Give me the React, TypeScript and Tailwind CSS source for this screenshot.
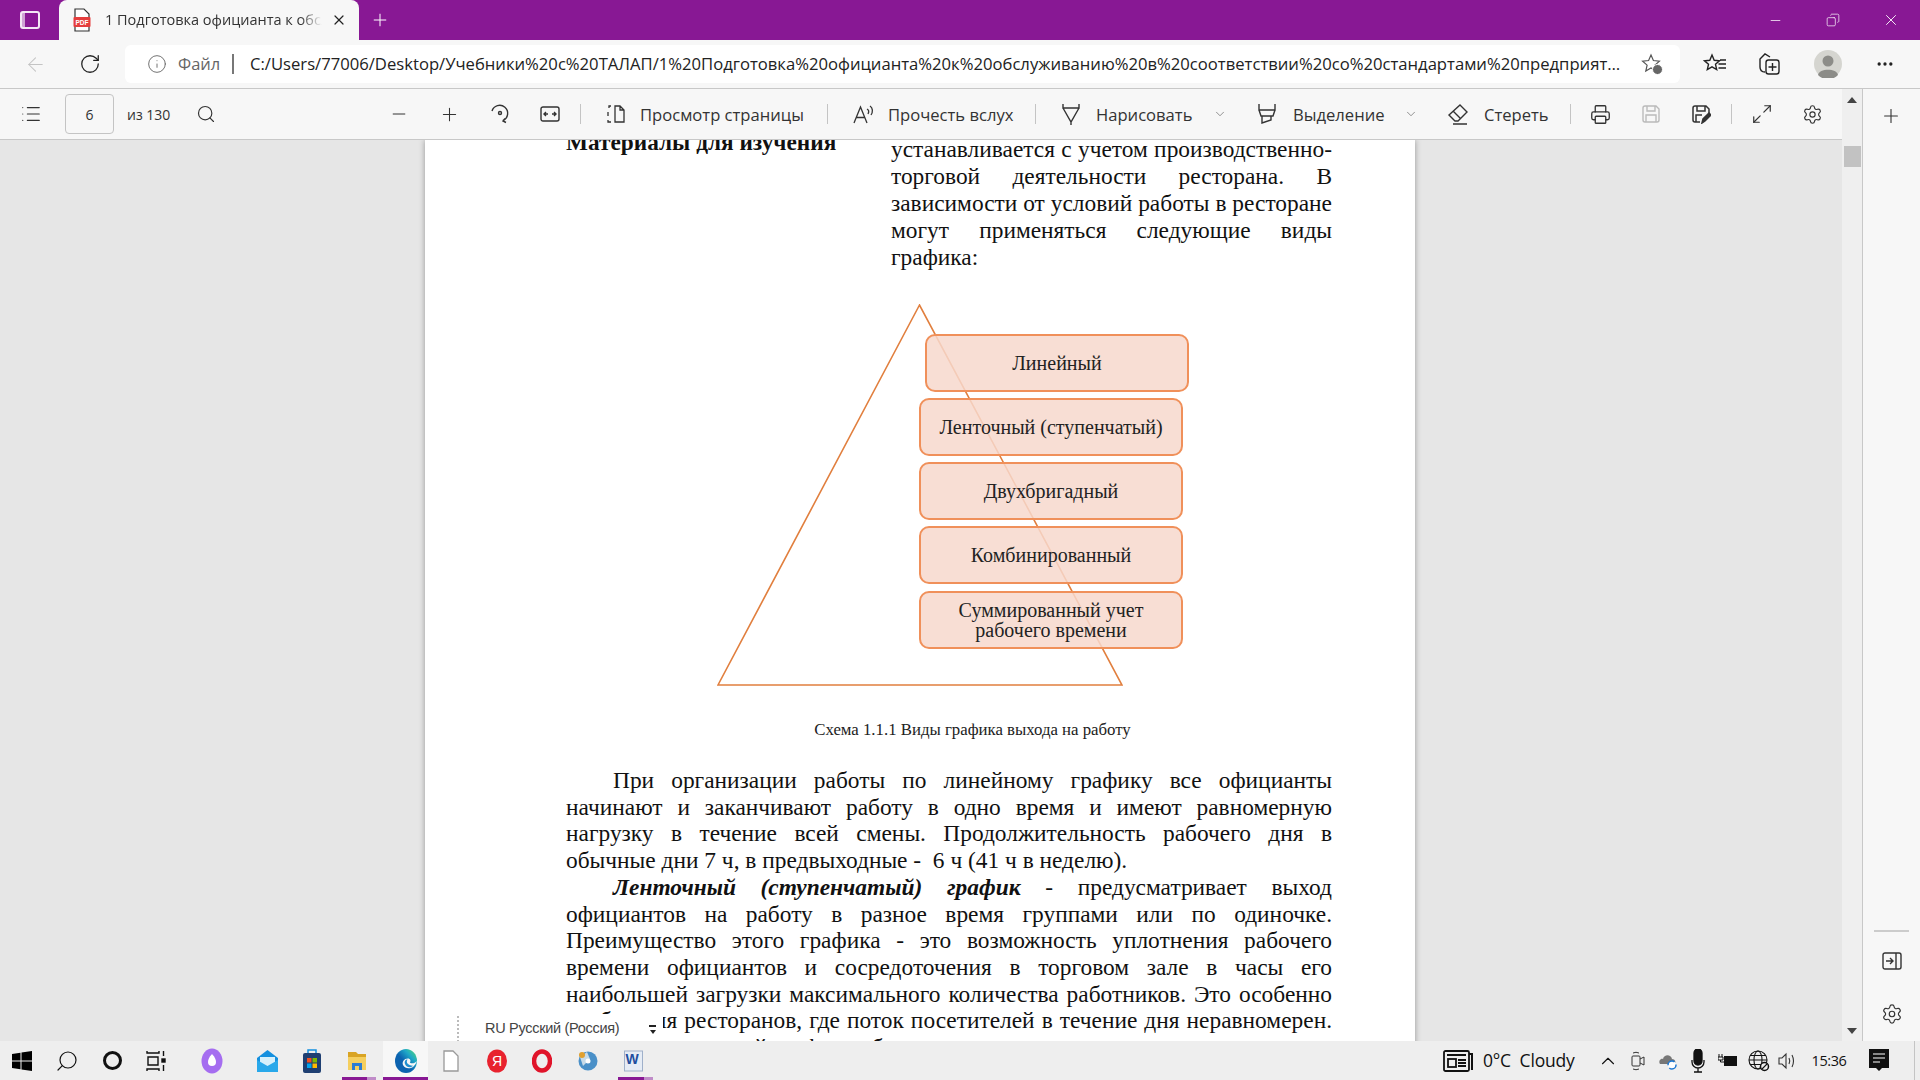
import { List, Minus, Plus, Search, RotateCw, Info, ArrowLeft, X, ChevronDown, ChevronUp, Settings, Printer, Maximize2, Copy, Ellipsis } from 'lucide-react';

const serif = "font-['Liberation_Serif',serif]";
const url = 'C:/Users/77006/Desktop/Учебники%20с%20ТАЛАП/1%20Подготовка%20официанта%20к%20обслуживанию%20в%20соответствии%20со%20стандартами%20предприятия.pdf';

function Sep({ cls }: { cls: string }) {
  return <span className={`${cls} w-px h-5 bg-[#c4c4c4] shrink-0`} />;
}

// fixed-width slot, keeps each toolbar item on its column
function Slot({ cls, children }: { cls: string; children: React.ReactNode }) {
  return <div className={`${cls} flex justify-center items-center shrink-0`}>{children}</div>;
}

function ToolLabel({ cls, children }: { cls: string; children: React.ReactNode }) {
  return <span className={`${cls} shrink-0 pt-[2px] text-[16.600px] text-[#333] whitespace-nowrap`}>{children}</span>;
}

function TitleBar() {
  return (
    <div className="h-10 bg-[#881894] flex items-end shrink-0">
      <Slot cls="w-[59px] h-10">
        <div className="w-[20px] h-[18px] border-2 border-white/90 rounded-[3px] flex"><span className="w-[3px] bg-white/60" /></div>
      </Slot>
      <div className="w-[300px] h-10 bg-[#f7f7f7] rounded-t-lg flex items-center">
        <svg width="18" height="24" viewBox="0 0 18 24" className="shrink-0 ml-[14px]">
          <path d="M2 1h9l5 5v17H2z" fill="#fff" stroke="#333" strokeWidth="1.2" />
          <rect x="0.5" y="9" width="17" height="10" rx="1" fill="#e53e3e" />
          <text x="9" y="16.500" fontSize="6.500" fontWeight="700" fill="#fff" textAnchor="middle" fontFamily="Liberation Sans">PDF</text>
        </svg>
        <span className="ml-[14px] text-[14.500px] text-[#333] w-[217px] overflow-hidden whitespace-nowrap font-['Open_Sans',sans-serif] [mask-image:linear-gradient(to_right,black_90%,transparent)]">1 Подготовка официанта к обслуживанию</span>
        <X size={16} strokeWidth={1.8} className="ml-[9px] text-[#222]" />
      </div>
      <Slot cls="w-[42px] h-10"><Plus size={20} strokeWidth={1.2} className="text-white" /></Slot>
      <div className="ml-auto flex h-10 items-center text-white">
        <Slot cls="w-[58px]"><Minus size={15} strokeWidth={1.2} /></Slot>
        <Slot cls="w-[58px]"><Copy size={14} strokeWidth={1.2} className="-scale-x-100" /></Slot>
        <Slot cls="w-[58px]"><X size={18} strokeWidth={1.2} /></Slot>
      </div>
    </div>
  );
}

function AddressBar() {
  return (
    <div className="h-[49px] bg-[#f7f7f7] flex items-center shrink-0 border-b border-[#c8c8c8] font-['Open_Sans',sans-serif]">
      <Slot cls="w-[70px]"><ArrowLeft size={23} strokeWidth={1.1} className="text-[#c4c4c4]" /></Slot>
      <Slot cls="w-[40px]"><RotateCw size={22} strokeWidth={1.4} className="text-[#222]" /></Slot>
      <div className="ml-[15px] w-[1555px] h-[38px] bg-white rounded-md flex items-center">
        <Info size={20} strokeWidth={1.1} className="ml-[22px] text-[#666] shrink-0" />
        <span className="ml-[11px] text-[16.500px] text-[#666] w-[40px]">Файл</span>
        <span className="ml-[14px] w-[2px] h-[20px] bg-[#777] shrink-0" />
        <span className="ml-[16px] text-[16.650px] text-[#222] truncate w-[1375px] block">{url}</span>
        <div className="relative ml-[16px]">
          <svg width="22" height="22" viewBox="0 0 22 22" fill="none" stroke="#555" strokeWidth="1.2">
            <path d="M10 2l2.400 5.500 6 .6-4.500 4 1.300 5.900L10 15l-5.200 3 1.300-5.900-4.500-4 6-.6z" />
          </svg>
          <span className="absolute right-0 bottom-0 w-[11px] h-[11px] rounded-full bg-[#666] border border-white" />
        </div>
      </div>
      <Slot cls="ml-[12px] w-[46px] text-[#222]">
        <svg width="24" height="22" viewBox="0 0 24 22" fill="none" stroke="currentColor" strokeWidth="1.4">
          <path d="M9 2l2.200 5.300 5.300.5-4 3.500 1.200 5.200L9 13.800l-4.700 2.700 1.200-5.200-4-3.500 5.300-.5z" />
          <path d="M17 7h6M15.500 11h7.500M15.500 15h7.500" />
        </svg>
      </Slot>
      <Slot cls="ml-[8px] w-[46px] text-[#222]">
        <svg width="22" height="24" viewBox="0 0 22 24" fill="none" stroke="currentColor" strokeWidth="1.4">
          <path d="M7 20c-3 0-5-2-5-5V7l5-5 5 3" />
          <rect x="8" y="8" width="13" height="14" rx="2.500" />
          <path d="M14.500 11v8M10.500 15h8" />
        </svg>
      </Slot>
      <Slot cls="ml-[22px] w-[28px]">
        <svg width="28" height="28" viewBox="0 0 28 28">
          <circle cx="14" cy="14" r="14" fill="#d5d5d0" />
          <circle cx="14" cy="11" r="5.500" fill="#8c8c88" />
          <path d="M4 25c1-7 19-7 20 0a14 14 0 0 1-20 0z" fill="#8c8c88" />
        </svg>
      </Slot>
      <Slot cls="ml-[28px] w-[30px]"><Ellipsis size={20} className="text-[#222]" /></Slot>
    </div>
  );
}

function PdfToolbar() {
  return (
    <div className="h-[51px] w-[1842px] bg-[#f7f7f7] flex items-center shrink-0 border-b border-[#c8c8c8] text-[#333] font-['Open_Sans',sans-serif]">
      <Slot cls="w-[62px]"><List size={22} strokeWidth={1.2} /></Slot>
      <div className="ml-[3px] w-[49px] h-[40px] shrink-0 border border-[#c4c4c4] rounded-sm flex items-center justify-center text-[14px]">6</div>
      <span className="ml-[13px] w-[44px] shrink-0 whitespace-nowrap text-[14px]">из 130</span>
      <Slot cls="ml-[15px] w-[40px]"><Search size={20} strokeWidth={1.4} /></Slot>
      <Slot cls="ml-[148px] w-[50px]"><Minus size={20} strokeWidth={1.2} /></Slot>
      <Slot cls="w-[50px]"><Plus size={21} strokeWidth={1.2} /></Slot>
      <Slot cls="ml-[1px] w-[50px]">
        <svg width="20" height="22" viewBox="0 0 20 22" fill="none" stroke="currentColor" strokeWidth="1.4">
          <path d="M2 8a8 8 0 1 1 11 9.500M15 15.500l-2 2.500 3 1.500" />
          <circle cx="10" cy="10" r="1.500" />
        </svg>
      </Slot>
      <Slot cls="w-[50px]">
        <svg width="20" height="16" viewBox="0 0 20 16" fill="none" stroke="currentColor" strokeWidth="1.4">
          <rect x="1" y="1" width="18" height="14" rx="2" />
          <path d="M4 8h4M12 8h4M6 6L4 8l2 2M14 6l2 2-2 2" />
        </svg>
      </Slot>
      <Sep cls="ml-[5px]" />
      <Slot cls="ml-[23px] w-[24px]">
        <svg width="20" height="20" viewBox="0 0 20 20" fill="none" stroke="currentColor" strokeWidth="1.3">
          <path d="M9 2h5l4 4v12H9zM14 2v4h4M5 2H3v2M2 8v4M2 16v2h3" />
        </svg>
      </Slot>
      <ToolLabel cls="ml-[12px] w-[164px]">Просмотр страницы</ToolLabel>
      <Sep cls="ml-[23px]" />
      <Slot cls="ml-[24px] w-[24px]">
        <svg width="24" height="22" viewBox="0 0 24 22" fill="none" stroke="currentColor" strokeWidth="1.3">
          <path d="M2 20L8.500 4 15 20M4.500 14.500h8M15 6c2 1 2 3 1 5M18 3c3 2 3 6 1 9" />
        </svg>
      </Slot>
      <ToolLabel cls="ml-[12px] w-[125px]">Прочесть вслух</ToolLabel>
      <Sep cls="ml-[22px]" />
      <Slot cls="ml-[23px] w-[24px]">
        <svg width="20" height="22" viewBox="0 0 20 22" fill="none" stroke="currentColor" strokeWidth="1.4">
          <path d="M2 1v4h16V1M2 5l8 14 8-14M10 19v3" />
        </svg>
      </Slot>
      <ToolLabel cls="ml-[13px] w-[94px]">Нарисовать</ToolLabel>
      <Slot cls="ml-[20px] w-[20px]"><ChevronDown size={14} strokeWidth={1.2} className="text-[#666]" /></Slot>
      <Slot cls="ml-[25px] w-[24px]">
        <svg width="20" height="22" viewBox="0 0 20 22" fill="none" stroke="currentColor" strokeWidth="1.4">
          <path d="M2 1v6h16V1M2 7l2 6h12l2-6M5 13v7l9-3v-4" />
        </svg>
      </Slot>
      <ToolLabel cls="ml-[14px] w-[88px]">Выделение</ToolLabel>
      <Slot cls="ml-[20px] w-[20px]"><ChevronDown size={14} strokeWidth={1.2} className="text-[#666]" /></Slot>
      <Slot cls="ml-[25px] w-[24px]">
        <svg width="22" height="22" viewBox="0 0 22 22" fill="none" stroke="currentColor" strokeWidth="1.4">
          <path d="M13 2l7 7-9 9H8l-6-6zM6 8l7 7M6 21h14" />
        </svg>
      </Slot>
      <ToolLabel cls="ml-[14px] w-[63px]">Стереть</ToolLabel>
      <Sep cls="ml-[23px]" />
      <Slot cls="ml-[14px] w-[30px]"><Printer size={21} strokeWidth={1.5} /></Slot>
      <Slot cls="ml-[21px] w-[30px]">
        <svg width="20" height="20" viewBox="0 0 20 20" fill="none" stroke="#bbb" strokeWidth="1.4">
          <path d="M2 4a2 2 0 0 1 2-2h11l3 3v11a2 2 0 0 1-2 2H4a2 2 0 0 1-2-2zM6 2v5h8V2M5 18v-7h10v7" />
        </svg>
      </Slot>
      <Slot cls="ml-[20px] w-[30px]">
        <svg width="20" height="20" viewBox="0 0 20 20" fill="none" stroke="currentColor" strokeWidth="1.5">
          <path d="M9 18H4a2 2 0 0 1-2-2V4a2 2 0 0 1 2-2h11l3 3v4M6 2v5h8V2M5 18v-7h6" />
          <path d="M11 19l1-4 6-6 2 2-6 6z" fill="currentColor" />
        </svg>
      </Slot>
      <Sep cls="ml-[15px]" />
      <Slot cls="ml-[15px] w-[30px]"><Maximize2 size={22} strokeWidth={1.3} /></Slot>
      <Slot cls="ml-[20px] w-[30px]"><Settings size={21} strokeWidth={1.3} /></Slot>
    </div>
  );
}

function Diagram() {
  const boxes = [
    { label: ['Линейный'], cls: 'ml-[6px]' },
    { label: ['Ленточный (ступенчатый)'], cls: '' },
    { label: ['Двухбригадный'], cls: '' },
    { label: ['Комбинированный'], cls: '' },
    { label: ['Суммированный учет', 'рабочего времени'], cls: '' },
  ];
  return (
    <div className="relative h-[382px] w-[406px] ml-[292px] mt-[14px]">
      <svg width="406" height="382" viewBox="0 0 406 382" className="absolute inset-0">
        <polygon points="202.500,1 1,381 405,381" fill="none" stroke="#e17f3e" strokeWidth="1.6" />
      </svg>
      <div className="absolute left-[202px] top-[29.500px] flex flex-col gap-[6.250px]">
        {boxes.map((b) => (
          <div key={b.label[0]} className={`${b.cls} w-[264px] h-[58px] rounded-[10px] border-2 border-[#f0905a] bg-[#f7d8cd]/85 flex flex-col items-center justify-center text-[20px] leading-[20px] text-[#222]`}>
            {b.label.map((l) => <span key={l}>{l}</span>)}
          </div>
        ))}
      </div>
    </div>
  );
}

function Line({ children, last }: { children: React.ReactNode; last?: boolean }) {
  return <div className={last ? 'whitespace-nowrap' : 'whitespace-nowrap [text-align-last:justify]'}>{children}</div>;
}

function PdfPage() {
  return (
    <div className={`relative w-[990px] h-[1000px] bg-white ml-[425px] ${serif} text-[#111] shadow-[0_0_6px_rgba(0,0,0,0.35)] overflow-hidden`}>
      <div className="relative h-[150px]">
        <div className="absolute left-[141px] -top-[10px] text-[23.300px] font-bold leading-[25px] whitespace-nowrap">Материалы для изучения</div>
        <div className="absolute left-[466px] w-[441px] -top-[4px] text-[23.400px] leading-[27px]">
          <Line>устанавливается с учетом производственно-</Line>
          <Line>торговой деятельности ресторана. В</Line>
          <Line>зависимости от условий работы в ресторане</Line>
          <Line>могут применяться следующие виды</Line>
          <Line last>графика:</Line>
        </div>
      </div>
      <Diagram />
      <div className="text-[16.800px] text-center leading-[20px] ml-[217px] w-[661px] mt-[34px] text-[#222]">Схема 1.1.1 Виды графика выхода на работу</div>
      <div className="ml-[141px] w-[766px] mt-[27px] text-[23.400px] leading-[26.700px]">
        <Line><span className="inline-block w-[47px]" />При организации работы по линейному графику все официанты</Line>
        <Line>начинают и заканчивают работу в одно время и имеют равномерную</Line>
        <Line>нагрузку в течение всей смены. Продолжительность рабочего дня в</Line>
        <Line last>обычные дни 7 ч, в предвыходные -&nbsp; 6 ч (41 ч в неделю).</Line>
        <Line><span className="inline-block w-[47px]" /><b><i>Ленточный (ступенчатый) график</i></b> - предусматривает выход</Line>
        <Line>официантов на работу в разное время группами или по одиночке.</Line>
        <Line>Преимущество этого графика - это возможность уплотнения рабочего</Line>
        <Line>времени официантов и сосредоточения в торговом зале в часы его</Line>
        <Line>наибольшей загрузки максимального количества работников. Это особенно</Line>
        <Line>удобно для ресторанов, где поток посетителей в течение дня неравномерен.</Line>
        <Line last><span className="inline-block w-[47px]" />При этом такой график работы</Line>
      </div>
      <div className="absolute left-0 top-[874px] w-[238px] h-[30px] bg-white flex items-center font-['Liberation_Sans',sans-serif] text-[14.500px] text-[#444]">
        <span className="ml-[32px] h-[26px] border-l-2 border-dotted border-[#bbb]" />
        <span className="ml-[26px] w-[133px] tracking-[-0.3px] whitespace-nowrap">RU Русский (Россия)</span>
        <span className="ml-[31px] flex flex-col items-center gap-[3px]">
          <span className="w-[7px] h-[2px] bg-[#222]" />
          <span className="w-0 h-0 border-x-[3px] border-x-transparent border-t-[4px] border-t-[#222]" />
        </span>
      </div>
    </div>
  );
}

function ScrollBar() {
  return (
    <div className="absolute left-[1842px] top-[89px] bottom-[39px] w-[20px] bg-[#efefef] flex flex-col items-center">
      <span className="mt-[8px] w-0 h-0 border-x-[5px] border-x-transparent border-b-[6px] border-b-[#444]" />
      <span className="mt-[43px] w-[17px] h-[21px] bg-[#c2c2c2]" />
      <span className="mt-auto mb-[7px] w-0 h-0 border-x-[5px] border-x-transparent border-t-[6px] border-t-[#444]" />
    </div>
  );
}

function SidePanel() {
  return (
    <div className="absolute left-[1862px] top-[89px] bottom-[39px] w-[58px] bg-[#f7f7f7] border-l border-[#c8c8c8] flex flex-col items-center text-[#333]">
      <Plus size={22} strokeWidth={1.2} className="mt-[16px] -ml-[1px]" />
      <span className="mt-auto w-[35px] h-[2px] bg-[#ccc]" />
      <svg width="20" height="18" viewBox="0 0 20 18" fill="none" stroke="currentColor" strokeWidth="1.4" className="mt-[20px]">
        <rect x="1" y="1" width="18" height="16" rx="2" />
        <path d="M14 1v16M4 9h7M8 6l3 3-3 3" />
      </svg>
      <Settings size={22} strokeWidth={1.3} className="mt-[33px] mb-[16px]" />
    </div>
  );
}

function Taskbar() {
  return (
    <div className="absolute left-0 right-0 bottom-0 h-[39px] bg-[#eeeeee] flex items-center text-[#111]">
      <Slot cls="w-[44px]">
        <svg width="20" height="20" viewBox="0 0 20 20" fill="#000">
          <path d="M0 3l8.500-1.200V9.500H0zM9.500 1.600L20 0v9.500H9.500zM0 10.500h8.500v7.700L0 17zM9.500 10.500H20V20L9.500 18.400z" />
        </svg>
      </Slot>
      <Slot cls="w-[46px]"><Search size={24} strokeWidth={1.2} className="-scale-x-100" /></Slot>
      <Slot cls="w-[44px]"><span className="w-[19px] h-[19px] rounded-full border-[3px] border-[#111]" /></Slot>
      <Slot cls="w-[44px]">
        <svg width="20" height="22" viewBox="0 0 20 22" fill="none" stroke="#111" strokeWidth="1.4">
          <path d="M1 1v2h12V1M1 21v-2h12v2M2 7h10v8H2z" />
          <rect x="16" y="9" width="3" height="3" fill="#111" />
          <path d="M17.500 1v5M17.500 15v6" />
        </svg>
      </Slot>
      <Slot cls="ml-[12px] w-[44px]">
        <svg width="22" height="26" viewBox="0 0 22 26">
          <ellipse cx="11" cy="13" rx="10.500" ry="12.500" fill="#a56df0" />
          <path d="M11 6c3 3 4 6 4 8a4 4 0 0 1-8 0c0-2 1-5 4-8z" fill="#fff" />
        </svg>
      </Slot>
      <Slot cls="ml-[11px] w-[44px]">
        <svg width="21" height="22" viewBox="0 0 21 22">
          <path d="M0 8L10.500 0 21 8v14H0z" fill="#1490df" />
          <path d="M3 7h15v7l-7.500 4L3 14z" fill="#d6f0fb" />
          <path d="M0 10l10.500 6L21 10v12H0z" fill="#28a8ea" />
        </svg>
      </Slot>
      <Slot cls="ml-[1px] w-[44px]">
        <svg width="20" height="26" viewBox="0 0 20 26">
          <path d="M6 5V2h8v3" fill="none" stroke="#1490df" strokeWidth="1.500" />
          <rect x="1" y="5" width="18" height="20" rx="2" fill="#1f3f72" />
          <rect x="5" y="10" width="4.500" height="4.500" fill="#f25022" /><rect x="10.500" y="10" width="4.500" height="4.500" fill="#7fba00" />
          <rect x="5" y="15.500" width="4.500" height="4.500" fill="#00a4ef" /><rect x="10.500" y="15.500" width="4.500" height="4.500" fill="#ffb900" />
        </svg>
      </Slot>
      <Slot cls="ml-[2px] w-[44px]">
        <svg width="20" height="20" viewBox="0 0 20 20"><path d="M0 1h8l2 2h8v4H0z" fill="#d9a424" /><path d="M0 6h18v13H0z" fill="#f5cf5f" /><path d="M4 12h10v7h-3v-4H7v4H4z" fill="#2b7cd3" /></svg>
      </Slot>
      <Slot cls="ml-[3px] w-[45px] h-[39px] bg-[#f7f7f7]">
        <svg width="22" height="24" viewBox="0 0 22 24">
          <defs>
            <linearGradient id="edgeFill" x1="0" y1="1" x2="1" y2="0">
              <stop offset="0.450" stopColor="#0c63b0" />
              <stop offset="0.700" stopColor="#1fa8c8" />
              <stop offset="0.950" stopColor="#4fd67a" />
            </linearGradient>
          </defs>
          <ellipse cx="11" cy="12" rx="11" ry="12" fill="url(#edgeFill)" />
          <path d="M8 16c2 4 7 4 10 2 2-2 3.500-4 3.800-6-2 2.500-5 3-7 1.500 1.500-1.500.5-4-2-4-3.500 0-6 3-4.800 6.500z" fill="#f7f7f7" />
          <path d="M10 15c-1-2.500.5-4.500 2.500-4.500-1 1.500-1 3 .5 4.500 2 1.500 4 2 5.500 1.500-3 3-7 2-8.500-1.500z" fill="#1f8fd0" />
        </svg>
      </Slot>
      <Slot cls="ml-[1px] w-[44px]">
        <svg width="16" height="22" viewBox="0 0 16 22"><path d="M1 1h9l5 5v15H1z" fill="#fff" stroke="#999" strokeWidth="1.300" /></svg>
      </Slot>
      <Slot cls="ml-[2px] w-[44px]">
        <svg width="20" height="24" viewBox="0 0 20 24"><ellipse cx="10" cy="12" rx="10" ry="11.500" fill="#e8222e" /><text x="10" y="17" textAnchor="middle" fontSize="14" fontFamily="Liberation Sans" fill="#fff">Я</text></svg>
      </Slot>
      <Slot cls="ml-[1px] w-[44px]">
        <svg width="20" height="24" viewBox="0 0 20 24"><ellipse cx="10" cy="12" rx="8" ry="9.500" fill="none" stroke="#e0142a" strokeWidth="4.500" /></svg>
      </Slot>
      <Slot cls="ml-[2px] w-[44px]">
        <svg width="20" height="20" viewBox="0 0 20 20"><circle cx="10" cy="10" r="9.500" fill="#4a90c8" /><path d="M2 6l7-5 3 7-7 7z" fill="#c8dbe8" /><circle cx="10" cy="10" r="2.500" fill="#fff" /><circle cx="4" cy="4" r="3" fill="#e0a030" /></svg>
      </Slot>
      <Slot cls="ml-[2px] w-[44px]">
        <svg width="20" height="22" viewBox="0 0 20 22"><rect x="0.500" y="1" width="18" height="20" fill="#e6ecf5" stroke="#9fb0ca" /><text x="8" y="14" fontSize="14" fontWeight="700" textAnchor="middle" fill="#1f4f9f" fontFamily="Liberation Sans">W</text></svg>
      </Slot>

      <Slot cls="ml-auto w-[30px]">
        <svg width="30" height="22" viewBox="0 0 30 22" fill="none" stroke="#111" strokeWidth="1.8">
          <rect x="1" y="1" width="25" height="20" rx="1.500" />
          <path d="M26 4h3v16M4 5h19" strokeWidth="2" />
          <rect x="5" y="9" width="8" height="8" /><path d="M15 10h8M15 13h8M15 16h8" />
        </svg>
      </Slot>
      <span className="ml-[10px] w-[94px] shrink-0 text-[17.500px] font-['Open_Sans',sans-serif] tracking-[-0.2px] whitespace-nowrap">0°C&nbsp; Cloudy</span>
      <Slot cls="ml-[16px] w-[30px]"><ChevronUp size={22} strokeWidth={1.2} /></Slot>
      <Slot cls="w-[30px]">
        <svg width="14" height="20" viewBox="0 0 14 20" fill="none" stroke="#333"><rect x="1" y="5" width="8" height="10" rx="1" /><path d="M9 8l4-2v8l-4-2M2 2q3-1.500 6 0M2 18q3 1.500 6 0" /></svg>
      </Slot>
      <Slot cls="w-[30px]">
        <svg width="20" height="20" viewBox="0 0 20 20"><path d="M2 13c-2-3 1-6 3-5 1-5 8-5 9 0 3 0 4 3 3 5z" fill="#777" /><circle cx="14" cy="14" r="4" fill="#fff" stroke="#1976d2" strokeWidth="1.500" strokeDasharray="9 3" /></svg>
      </Slot>
      <Slot cls="w-[29px]">
        <svg width="14" height="24" viewBox="0 0 14 24" fill="none" stroke="#111" strokeWidth="1.300"><rect x="3" y="0" width="8" height="16" rx="4" fill="#111" /><path d="M1 11v2a6 6 0 0 0 12 0v-2M7 19v4M3 23h8" /></svg>
      </Slot>
      <Slot cls="w-[32px]">
        <svg width="20" height="14" viewBox="0 0 20 14"><rect x="6" y="2" width="13" height="10" fill="#111" /><path d="M1 0v3M4 0v3M0 3h5v3H0zM2.500 6v2H6" stroke="#111" fill="none" /></svg>
      </Slot>
      <Slot cls="w-[29px]">
        <svg width="22" height="22" viewBox="0 0 22 22" fill="none" stroke="#111" strokeWidth="1.100">
          <circle cx="10" cy="10" r="9" /><ellipse cx="10" cy="10" rx="4" ry="9" /><path d="M1 10h18M2 5.500h16M2 14.500h16" />
          <circle cx="16.500" cy="16.500" r="4" fill="#eee" strokeWidth="1.500" /><path d="M14 19l5-5" />
        </svg>
      </Slot>
      <Slot cls="w-[30px]">
        <svg width="20" height="20" viewBox="0 0 20 20" fill="none" stroke="#333" strokeWidth="1.100"><path d="M1 7h3l4-4v14l-4-4H1zM11 7c1 2 1 4 0 6M14 4c2 4 2 8 0 12" /></svg>
      </Slot>
      <span className="w-[52px] shrink-0 text-center text-[14.500px] font-['Open_Sans',sans-serif] tracking-[-0.4px]">15:36</span>
      <Slot cls="w-[48px]">
        <svg width="20" height="24" viewBox="0 0 20 24"><path d="M0 0h20v19h-7l-3 3-3-3H0z" fill="#111" /><path d="M4 5h12M4 9h12M4 13h7" stroke="#fff" strokeWidth="1.200" /></svg>
      </Slot>
      <span className="ml-[11px] mr-[5px] w-px h-[39px] bg-[#c4c4c4] shrink-0" />

      {[
        { left: 342, w: 25, c: 'bg-[#881894]' }, { left: 367, w: 9, c: 'bg-[#c08cc8]' }, { left: 383, w: 45, c: 'bg-[#881894]' },
        { left: 618, w: 26, c: 'bg-[#881894]' }, { left: 644, w: 9, c: 'bg-[#c08cc8]' },
      ].map((b) => (
        <span key={b.left} className={`absolute bottom-0 h-[3px] ${b.c}`} style={{ left: b.left, width: b.w }} />
      ))}
    </div>
  );
}

export default function App() {
  return (
    <div className="relative w-[1920px] h-[1080px] overflow-hidden bg-[#e6e6e6] font-['Liberation_Sans',sans-serif] flex flex-col">
      <TitleBar />
      <AddressBar />
      <PdfToolbar />
      <div className="flex-1 overflow-hidden"><PdfPage /></div>
      <ScrollBar />
      <SidePanel />
      <Taskbar />
    </div>
  );
}
